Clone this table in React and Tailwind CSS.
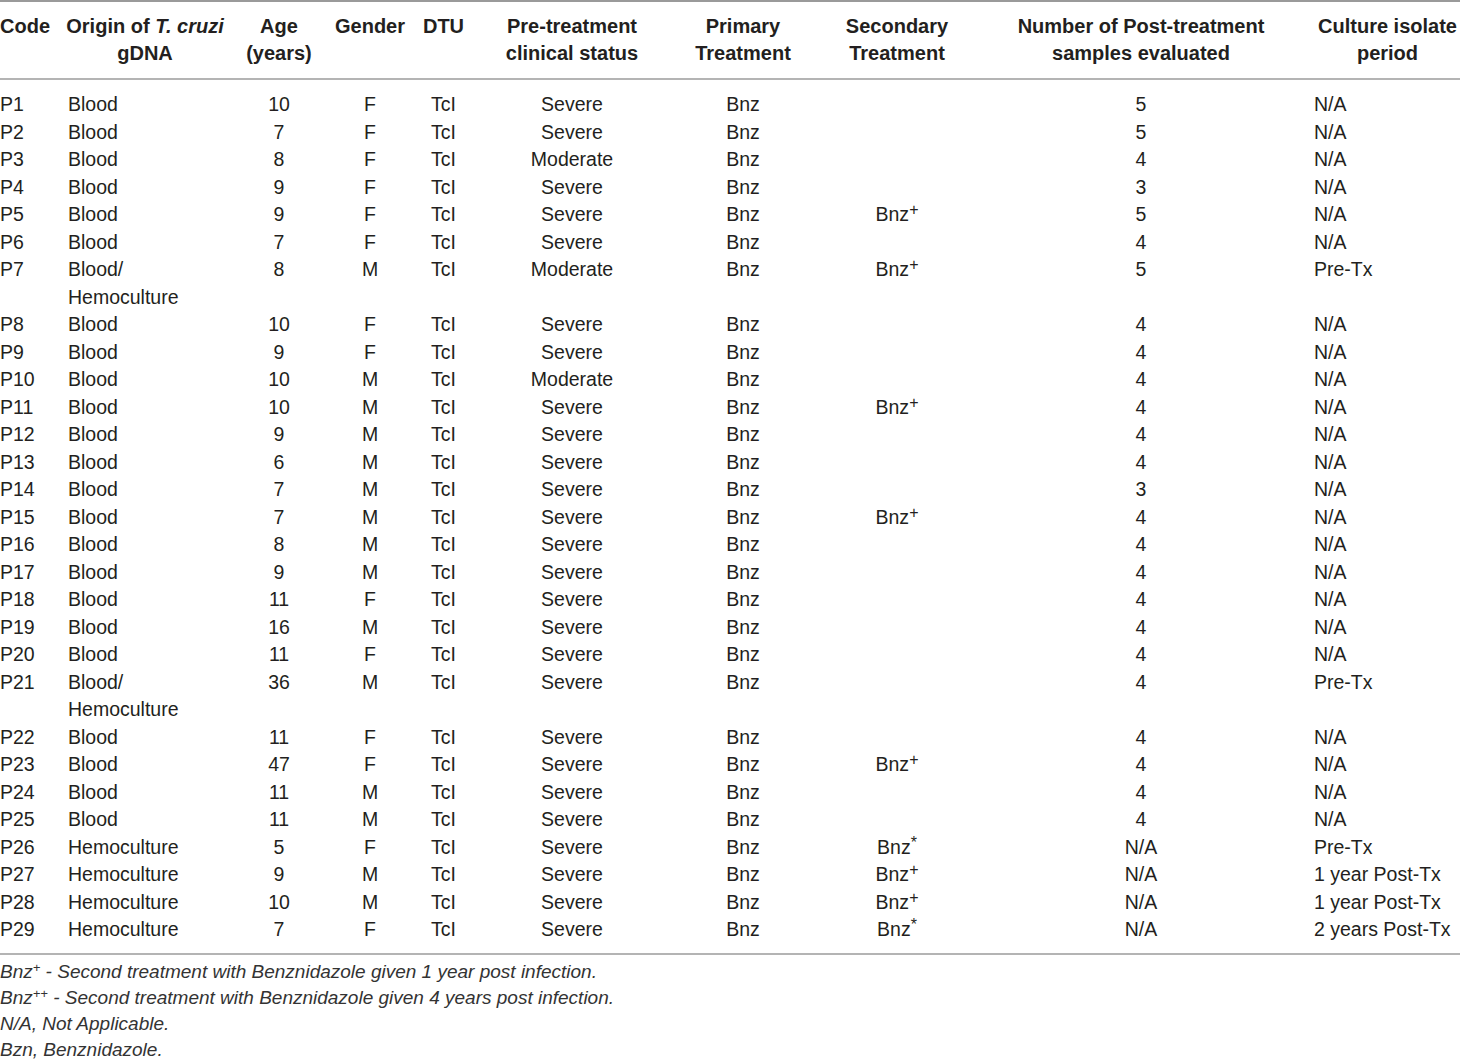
import React from 'react';

const rows = [
  ['P1', 'Blood', '10', 'F', 'Severe', '', '5', 'N/A'],
  ['P2', 'Blood', '7', 'F', 'Severe', '', '5', 'N/A'],
  ['P3', 'Blood', '8', 'F', 'Moderate', '', '4', 'N/A'],
  ['P4', 'Blood', '9', 'F', 'Severe', '', '3', 'N/A'],
  ['P5', 'Blood', '9', 'F', 'Severe', '+', '5', 'N/A'],
  ['P6', 'Blood', '7', 'F', 'Severe', '', '4', 'N/A'],
  ['P7', 'Blood/ Hemoculture', '8', 'M', 'Moderate', '+', '5', 'Pre-Tx'],
  ['P8', 'Blood', '10', 'F', 'Severe', '', '4', 'N/A'],
  ['P9', 'Blood', '9', 'F', 'Severe', '', '4', 'N/A'],
  ['P10', 'Blood', '10', 'M', 'Moderate', '', '4', 'N/A'],
  ['P11', 'Blood', '10', 'M', 'Severe', '+', '4', 'N/A'],
  ['P12', 'Blood', '9', 'M', 'Severe', '', '4', 'N/A'],
  ['P13', 'Blood', '6', 'M', 'Severe', '', '4', 'N/A'],
  ['P14', 'Blood', '7', 'M', 'Severe', '', '3', 'N/A'],
  ['P15', 'Blood', '7', 'M', 'Severe', '+', '4', 'N/A'],
  ['P16', 'Blood', '8', 'M', 'Severe', '', '4', 'N/A'],
  ['P17', 'Blood', '9', 'M', 'Severe', '', '4', 'N/A'],
  ['P18', 'Blood', '11', 'F', 'Severe', '', '4', 'N/A'],
  ['P19', 'Blood', '16', 'M', 'Severe', '', '4', 'N/A'],
  ['P20', 'Blood', '11', 'F', 'Severe', '', '4', 'N/A'],
  ['P21', 'Blood/ Hemoculture', '36', 'M', 'Severe', '', '4', 'Pre-Tx'],
  ['P22', 'Blood', '11', 'F', 'Severe', '', '4', 'N/A'],
  ['P23', 'Blood', '47', 'F', 'Severe', '+', '4', 'N/A'],
  ['P24', 'Blood', '11', 'M', 'Severe', '', '4', 'N/A'],
  ['P25', 'Blood', '11', 'M', 'Severe', '', '4', 'N/A'],
  ['P26', 'Hemoculture', '5', 'F', 'Severe', '*', 'N/A', 'Pre-Tx'],
  ['P27', 'Hemoculture', '9', 'M', 'Severe', '+', 'N/A', '1 year Post-Tx'],
  ['P28', 'Hemoculture', '10', 'M', 'Severe', '+', 'N/A', '1 year Post-Tx'],
  ['P29', 'Hemoculture', '7', 'F', 'Severe', '*', 'N/A', '2 years Post-Tx'],
];

const Sup = ({ children }) => (
  <span className="text-[16px] relative top-[-6px] leading-none align-baseline">{children}</span>
);

const NoteSup = ({ children }) => (
  <span className="text-[13px] relative top-[-6px] leading-none align-baseline">{children}</span>
);

const Th = ({ children, className = '' }) => (
  <th className={`font-bold text-center align-top pt-[11px] ${className}`}>{children}</th>
);

export default function App() {
  return (
    <div
      className="w-[1460px] bg-white text-[#231f20]"
      style={{ fontFamily: '"Liberation Sans", Arial, sans-serif' }}
    >
      <table className="w-[1460px] table-fixed border-collapse">
        <colgroup>
          <col className="w-[64px]" />
          <col className="w-[162px]" />
          <col className="w-[106px]" />
          <col className="w-[76px]" />
          <col className="w-[71px]" />
          <col className="w-[186px]" />
          <col className="w-[156px]" />
          <col className="w-[152px]" />
          <col className="w-[336px]" />
          <col className="w-[151px]" />
        </colgroup>
        <thead>
          <tr className="text-[20px] leading-[27px] border-t-2 border-b-2 border-t-[#9a9a9a] border-b-[#b4b4b4]">
            <Th className="!text-left pb-[11px]">Code</Th>
            <Th className="pb-[11px]">
              Origin of <i>T. cruzi</i>
              <br />
              gDNA
            </Th>
            <Th>
              Age
              <br />
              (years)
            </Th>
            <Th>Gender</Th>
            <Th>DTU</Th>
            <Th>
              Pre-treatment
              <br />
              clinical status
            </Th>
            <Th>
              Primary
              <br />
              Treatment
            </Th>
            <Th>
              Secondary
              <br />
              Treatment
            </Th>
            <Th>
              Number of Post-treatment
              <br />
              samples evaluated
            </Th>
            <Th className="pl-[6px]">
              Culture isolate
              <br />
              period
            </Th>
          </tr>
        </thead>
        <tbody className="text-[19.5px] leading-[27.5px] border-b-2 border-b-[#b4b4b4]">
          {rows.map((r, i) => {
            const top = i === 0 ? 'pt-[11px]' : '';
            return (
              <tr key={r[0]} className="align-top">
                <td className={`text-left ${top} ${i === rows.length - 1 ? 'pb-[9px]' : ''}`}>{r[0]}</td>
                <td className={`text-left pl-[4px] ${top}`}>
                  {r[1].includes('/') ? (
                    <>
                      Blood/
                      <br />
                      Hemoculture
                    </>
                  ) : r[1]}
                </td>
                <td className={`text-center ${top}`}>{r[2]}</td>
                <td className={`text-center ${top}`}>{r[3]}</td>
                <td className={`text-center ${top}`}>TcI</td>
                <td className={`text-center ${top}`}>{r[4]}</td>
                <td className={`text-center ${top}`}>Bnz</td>
                <td className={`text-center ${top}`}>
                  {r[5] && (
                    <>
                      Bnz<Sup>{r[5]}</Sup>
                    </>
                  )}
                </td>
                <td className={`text-center ${top}`}>{r[6]}</td>
                <td className={`text-left pl-[5px] whitespace-nowrap ${top}`}>{r[7]}</td>
              </tr>
            );
          })}
        </tbody>
      </table>
      <div className="pt-[4px] text-[19px] leading-[26.3px] italic text-[#333]">
        <p>
          Bnz<NoteSup>+</NoteSup> - Second treatment with Benznidazole given 1 year post infection.
        </p>
        <p>
          Bnz<NoteSup>++</NoteSup> - Second treatment with Benznidazole given 4 years post infection.
        </p>
        <p>N/A, Not Applicable.</p>
        <p>Bzn, Benznidazole.</p>
      </div>
    </div>
  );
}
